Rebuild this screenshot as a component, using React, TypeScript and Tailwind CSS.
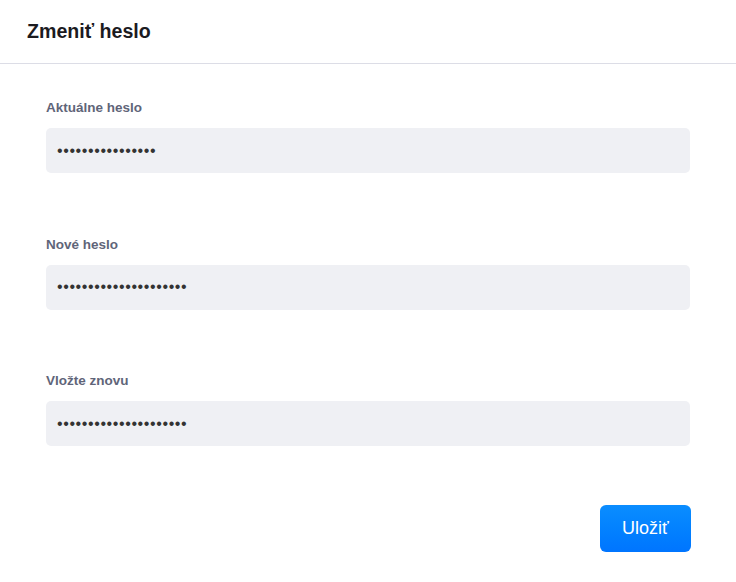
import { useState } from "react";

const fields = [
	{ id: "current", label: "Aktuálne heslo", value: "aaaaaaaaaaaaaaaa" },
	{ id: "new", label: "Nové heslo", value: "aaaaaaaaaaaaaaaaaaaaa" },
	{ id: "repeat", label: "Vložte znovu", value: "aaaaaaaaaaaaaaaaaaaaa" },
];

function PasswordField({ id, label, value }: { id: string; label: string; value: string }) {
	const [val, setVal] = useState(value);

	return (
		<div>
			<label htmlFor={id} className="block text-[13.5px] leading-5 font-bold text-[#5f6579]">
				{label}
			</label>
			<input
				type="password"
				id={id}
				name={id}
				value={val}
				onChange={(e) => setVal(e.target.value)}
				className="mt-[10px] block w-full h-[45px] rounded-[5px] bg-[#eff0f4] px-[11px] text-[16px] tracking-[0.6px] text-[#333] outline-none"
			/>
		</div>
	);
}

export default function App() {
	return (
		<div className="w-[736px] h-[582px] bg-white font-['Liberation_Sans',Arial,sans-serif]">
			<div className="h-[64px] border-b border-[#dcdde6] flex items-center px-[27px]">
				<h1 className="text-[19.6px] font-bold text-[#1b1b1f]">Zmeniť heslo</h1>
			</div>
			<form className="px-[46px] pt-[34px]">
				<div className="flex flex-col gap-[61.5px]">
					{fields.map((f) => (
						<PasswordField key={f.id} {...f} />
					))}
				</div>
				<div className="flex justify-end mt-[59px] -mr-[1px]">
					<button
						type="button"
						className="w-[91px] h-[47px] rounded-[6px] bg-gradient-to-b from-[#0b8dff] to-[#0075ff] text-white text-[18px] font-medium"
					>
						Uložiť
					</button>
				</div>
			</form>
		</div>
	);
}
